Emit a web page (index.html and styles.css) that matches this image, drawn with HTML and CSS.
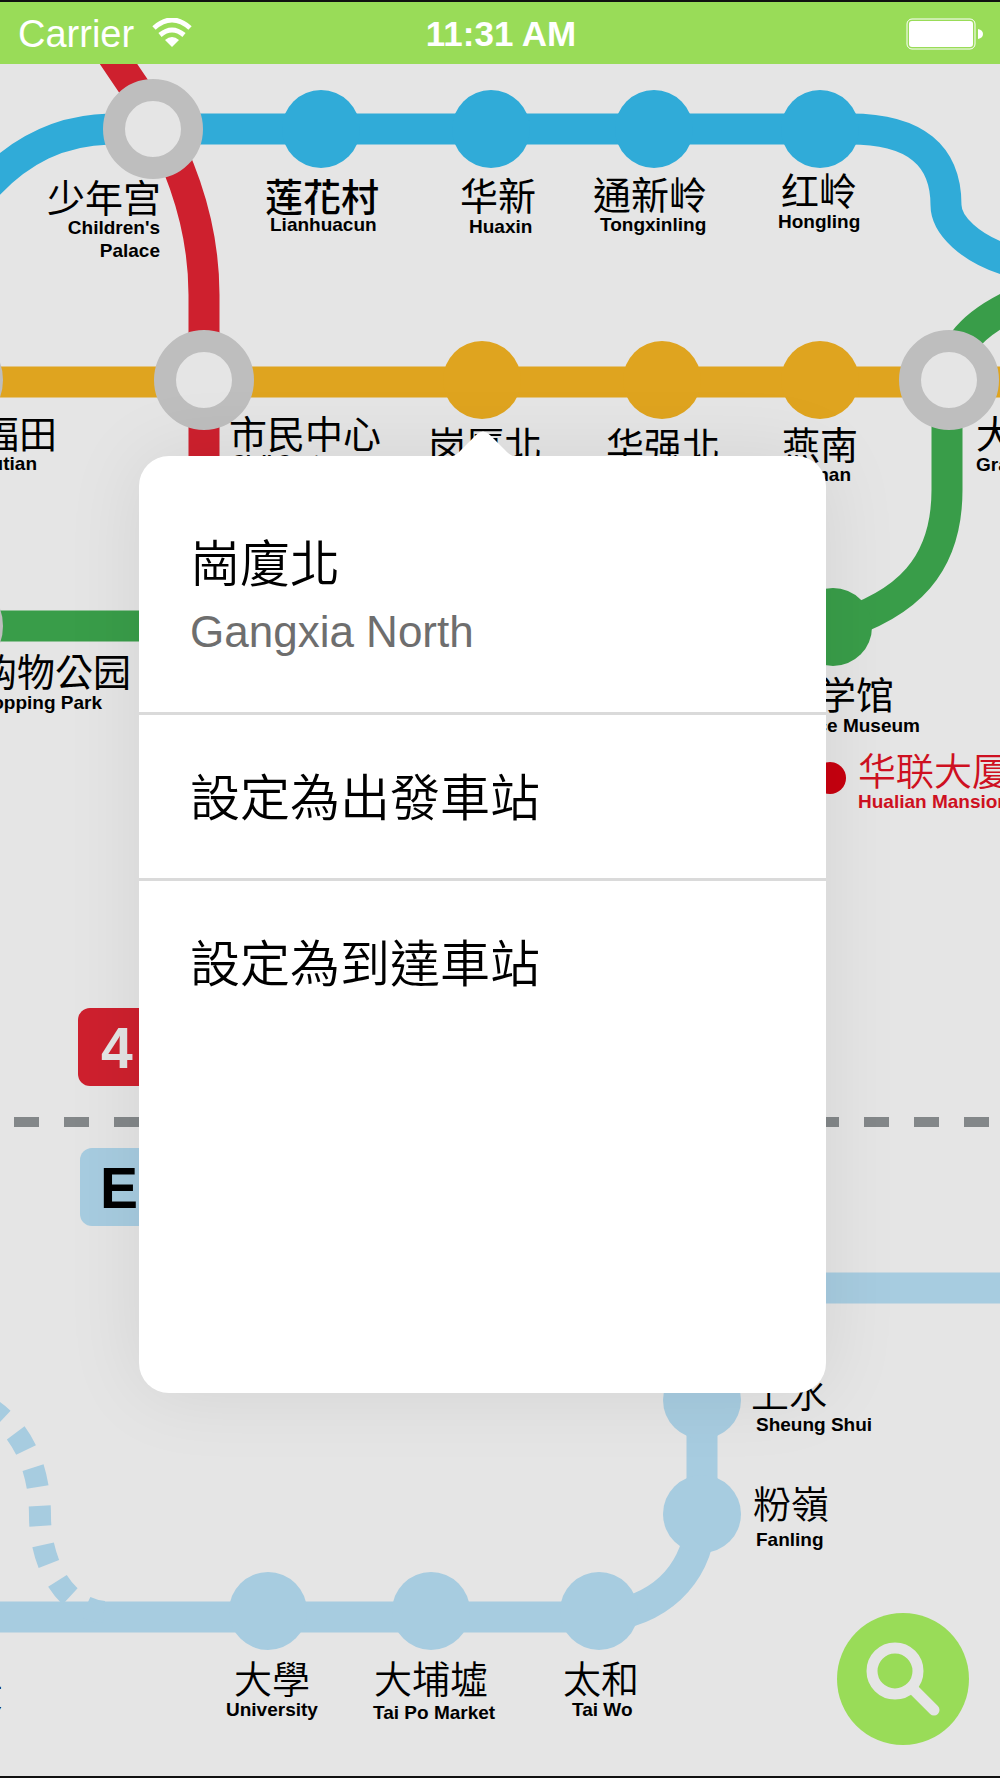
FILE: index.html
```html
<!DOCTYPE html>
<html lang="zh-Hant">
<head>
    <meta charset="UTF-8">
    <meta name="viewport" content="width=device-width, initial-scale=1.0">
    <title>Metro Map</title>
    <link rel="stylesheet" href="styles.css">
</head>
<body>

<header class="status-bar">
    <div class="carrier">
        <span>Carrier</span>
        <svg class="wifi" viewBox="0 0 40 30" aria-hidden="true">
            <path class="wifi-arc" d="M2 10 Q20 -6 38 10"/>
            <path class="wifi-arc" d="M8 17 Q20 7 32 17"/>
            <path class="wifi-dot" d="M13 22 Q20 16 27 22 L20 29 Z"/>
        </svg>
    </div>
    <time class="clock">11:31 AM</time>
    <div class="battery-side">
        <svg class="battery" viewBox="0 0 78 32" aria-hidden="true">
            <rect class="battery-case" x="1" y="1" width="68" height="30" rx="5"/>
            <rect class="battery-fill" x="3" y="3" width="64" height="26" rx="3"/>
            <path class="battery-fill" d="M72 11 Q77 12 77 16 Q77 20 72 21 Z"/>
        </svg>
    </div>
</header>

<main class="map-view">
    <svg class="map" viewBox="0 64 1000 1712" preserveAspectRatio="xMidYMin slice">
        <!-- lines -->
        <g class="line">
            <path class="blue" d="M-15 188 C20 150 60 130 110 129 H850 C916 129 946 156 946 205 C946 225 970 249 1010 261"/>
            <path class="red" d="M105 44 L153 115 C190 180 204 240 204 295 V480"/>
            <path class="orange" d="M-20 382 H1010"/>
            <path class="green" d="M-20 626 H160"/>
            <path class="green" d="M1015 304 C970 325 947 350 947 400 V490 C947 565 908 605 833 627"/>
            <path class="sky" d="M700 1288 H1010"/>
            <path class="sky" d="M-10 1617 H600 C655 1612 698 1580 702 1514 V1400"/>
            <path class="sky spur" d="M40 1516 C40 1465 20 1426 -14 1406"/>
            <path class="sky spur" d="M40 1516 C40 1560 62 1608 104 1612"/>
            <path class="border" d="M14 1122 H1010"/>
        </g>

        <!-- stations -->
        <g class="stop blue">
            <circle cx="321" cy="129" r="39"/>
            <circle cx="491" cy="129" r="39"/>
            <circle cx="654" cy="129" r="39"/>
            <circle cx="820" cy="129" r="39"/>
        </g>
        <g class="stop orange">
            <circle cx="482" cy="380" r="39"/>
            <circle cx="662" cy="380" r="39"/>
            <circle cx="820" cy="380" r="39"/>
        </g>
        <g class="stop green">
            <circle cx="833" cy="627" r="39"/>
        </g>
        <g class="stop sky">
            <circle cx="702" cy="1400" r="39"/>
            <circle cx="702" cy="1514" r="39"/>
            <circle cx="268" cy="1611" r="39"/>
            <circle cx="431" cy="1611" r="39"/>
            <circle cx="599" cy="1611" r="39"/>
        </g>
        <g class="interchange">
            <circle cx="153" cy="129" r="39"/>
            <circle cx="204" cy="380" r="39"/>
            <circle cx="949" cy="380" r="39"/>
            <circle cx="-47" cy="380" r="39"/>
            <circle cx="-47" cy="626" r="39"/>
        </g>
        <circle class="place" cx="830" cy="778" r="16"/>

        <!-- line badges -->
        <rect class="badge-red" x="78" y="1008" width="120" height="78" rx="12"/>
        <text class="badge-text light" x="101" y="1068">4</text>
        <rect class="badge-sky" x="80" y="1148" width="120" height="78" rx="12"/>
        <text class="badge-text" x="100" y="1208">E</text>

        <!-- Chinese names -->
        <g class="name">
            <text x="47" y="212">少年宫</text>
            <text class="strong" x="265" y="211">莲花村</text>
            <text x="460" y="210">华新</text>
            <text x="593" y="209">通新岭</text>
            <text x="781" y="205">红岭</text>
            <text class="end" x="57" y="448">福田</text>
            <text x="229" y="448">市民中心</text>
            <text x="428" y="459">岗厦北</text>
            <text x="606" y="460">华强北</text>
            <text x="782" y="459">燕南</text>
            <text x="976" y="448">大剧院</text>
            <text class="end" x="131" y="686">购物公园</text>
            <text class="end" x="894" y="709">科学馆</text>
            <text class="thin crimson" x="858" y="785">华联大厦</text>
        </g>
        <g class="name traditional">
            <text x="751" y="1407">上水</text>
            <text x="753" y="1518">粉嶺</text>
            <text class="end" x="3" y="1706">火炭</text>
            <text x="234" y="1693">大學</text>
            <text x="374" y="1693">大埔墟</text>
            <text x="563" y="1693">太和</text>
        </g>

        <!-- English names -->
        <g class="latin">
            <text class="end" x="160" y="234">Children's</text>
            <text class="end" x="160" y="257">Palace</text>
            <text x="270" y="231">Lianhuacun</text>
            <text x="469" y="233">Huaxin</text>
            <text x="600" y="231">Tongxinling</text>
            <text x="778" y="228">Hongling</text>
            <text class="end" x="37" y="470">Futian</text>
            <text x="232" y="468">Civil Center</text>
            <text class="end" x="851" y="481">Yannan</text>
            <text x="976" y="471">Grand Theater</text>
            <text class="end" x="102" y="709">Shopping Park</text>
            <text class="end" x="920" y="732">Science Museum</text>
            <text class="crimson" x="858" y="808">Hualian Mansion</text>
            <text x="756" y="1431">Sheung Shui</text>
            <text x="756" y="1546">Fanling</text>
            <text x="226" y="1716">University</text>
            <text x="373" y="1719">Tai Po Market</text>
            <text x="572" y="1716">Tai Wo</text>
        </g>
    </svg>

    <section class="popover">
        <svg class="popover-arrow" viewBox="0 0 72 26" aria-hidden="true">
            <path d="M0 26 C8 26 11 22 15 18 L29 4 Q36 -3 43 4 L57 18 C61 22 64 26 72 26 Z"/>
        </svg>
        <div class="station">
            <h1>崗廈北</h1>
            <p>Gangxia North</p>
        </div>
        <button class="action" type="button">設定為出發車站</button>
        <button class="action" type="button">設定為到達車站</button>
    </section>

    <button class="search" type="button" aria-label="Search">
        <svg viewBox="0 0 132 132" aria-hidden="true">
            <circle cx="58" cy="58" r="23"/>
            <path d="M77 77 L97 97"/>
        </svg>
    </button>
</main>

</body>
</html>
```
FILE: styles.css
```css
* {
    box-sizing: border-box;
}
body {
    display: flex;
    flex-direction: column;
    min-height: 100vh;
    margin: 0;
    border-top: 2px solid #111;
    border-bottom: 2px solid #111;
    background: #e5e5e5;
    font-family: "Liberation Sans", "Noto Sans CJK TC", sans-serif;
}

/* status bar */
.status-bar {
    display: grid;
    grid-template-columns: 1fr auto 1fr;
    align-items: center;
    height: 62px;
    padding: 2px 16px 0 18px;
    background: #99dc58;
    color: #fff;
    font-size: 38px;
}
.carrier {
    display: flex;
    align-items: center;
    gap: 18px;
}
.wifi {
    width: 40px;
    height: 30px;
    margin-bottom: 2px;
}
.wifi-arc {
    fill: none;
    stroke: #fff;
    stroke-width: 5;
}
.wifi-dot,
.battery-fill {
    fill: #fff;
}
.clock {
    font-size: 35px;
    font-weight: bold;
}
.battery-side {
    display: flex;
    justify-content: flex-end;
}
.battery {
    width: 78px;
    height: 32px;
}
.battery-case {
    fill: none;
    stroke: #fff;
    stroke-width: 1;
}

/* map */
.map-view {
    position: relative;
    flex: 1;
    overflow: hidden;
}
.map {
    display: block;
    width: 100%;
}
.blue { --line: #30abd8; }
.red { --line: #ce202e; }
.orange { --line: #dfa41f; }
.green { --line: #399d49; }
.sky { --line: #a7cce0; }
.line path {
    fill: none;
    stroke: var(--line);
    stroke-width: 31;
}
.line .spur {
    stroke-width: 22;
    stroke-dasharray: 20 19;
    stroke-dashoffset: 10;
}
.line .border {
    stroke: #838789;
    stroke-width: 10;
    stroke-dasharray: 25 25;
}
.stop {
    fill: var(--line);
}
.interchange {
    fill: #e5e5e5;
    stroke: #bebebe;
    stroke-width: 22;
}
.place {
    fill: #c7000f;
}
.badge-red {
    fill: #ce202e;
}
.badge-sky {
    fill: #a7cce0;
}
.badge-text {
    font-size: 57px;
    font-weight: bold;
}
.badge-text.light {
    fill: #e5e5e5;
}
.name {
    font-family: "Noto Sans CJK SC", sans-serif;
    font-size: 38px;
}
.name .strong {
    font-weight: 500;
}
.name.traditional {
    font-family: "Noto Sans CJK TC", sans-serif;
    font-weight: 350;
}
.name .thin {
    font-weight: 350;
}
.latin {
    font-size: 19px;
    font-weight: bold;
}
.end {
    text-anchor: end;
}
.crimson {
    fill: #ce1021;
}

/* station popover */
.popover {
    position: absolute;
    top: 392px;
    right: 174px;
    bottom: 383px;
    left: 139px;
    border-radius: 30px;
    background: #fff;
    box-shadow: 0 0 80px rgba(0, 0, 0, 0.08);
}
.popover-arrow {
    position: absolute;
    top: -25px;
    left: 308px;
    width: 72px;
    height: 26px;
    fill: #fff;
}
.station {
    padding: 73px 51px 52px;
    border-bottom: 3px solid #dadada;
}
.station h1 {
    margin: 0;
    font-size: 50px;
    font-weight: 350;
    line-height: 72px;
}
.station p {
    margin: 3px 0 0;
    color: #6e6e6e;
    font-size: 44px;
    line-height: 56px;
}
.action {
    display: block;
    width: 100%;
    height: 163px;
    padding: 0 51px 6px;
    border: 0;
    background: none;
    color: #000;
    font-family: inherit;
    font-size: 50px;
    font-weight: 350;
    text-align: left;
    cursor: pointer;
}
.action + .action {
    height: 166px;
    border-top: 3px solid #dadada;
}

/* search button */
.search {
    position: absolute;
    right: 31px;
    bottom: 31px;
    width: 132px;
    height: 132px;
    padding: 0;
    border: 0;
    border-radius: 50%;
    background: #99dc58;
    cursor: pointer;
}
.search svg {
    display: block;
    fill: none;
    stroke: #e5e5e5;
    stroke-width: 11;
    stroke-linecap: round;
}
```
